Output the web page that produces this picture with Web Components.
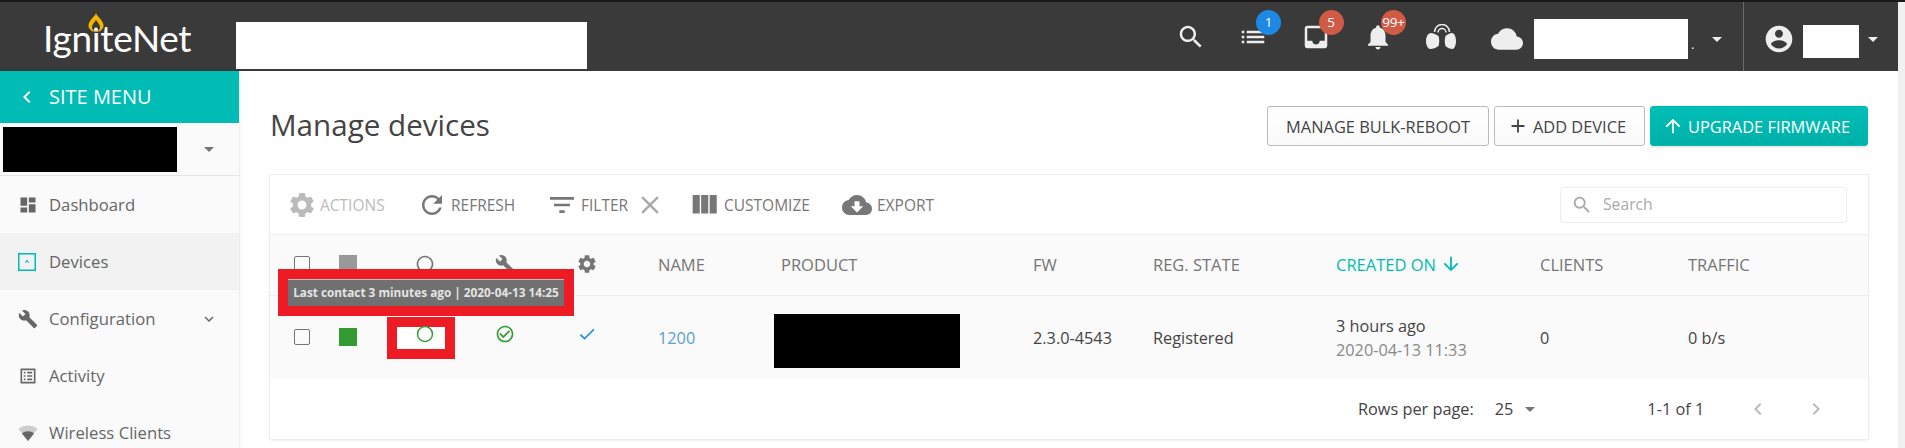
<!DOCTYPE html>
<html lang="en">
<head>
<meta charset="utf-8">
<title>Manage devices</title>
<style>
  html, body { margin: 0; height: 448px; overflow: hidden; background: #fff; }
  body { font-family: "Open Sans", "Liberation Sans", sans-serif; }
</style>
</head>
<body>
<ig-app>
  <ig-topbar slot="top"></ig-topbar>
  <ig-sidebar slot="side">
    <ig-nav-item icon="dashboard">Dashboard</ig-nav-item>
    <ig-nav-item icon="devices" active>Devices</ig-nav-item>
    <ig-nav-item icon="wrench" expandable>Configuration</ig-nav-item>
    <ig-nav-item icon="activity">Activity</ig-nav-item>
    <ig-nav-item icon="wifi">Wireless Clients</ig-nav-item>
  </ig-sidebar>
  <ig-page-head>
    <ig-button style="width: 222px">MANAGE BULK-REBOOT</ig-button>
    <ig-button style="width: 151px" icon="add">ADD DEVICE</ig-button>
    <ig-button style="width: 218px" icon="up" primary>UPGRADE FIRMWARE</ig-button>
  </ig-page-head>
  <ig-device-card></ig-device-card>
  <ig-callout slot="over" class="tip">Last contact 3 minutes ago | 2020-04-13 14:25</ig-callout>
  <ig-callout slot="over" class="spot"></ig-callout>
</ig-app>

<script>
const ICONS = {
  search: 'M15.5 14h-.79l-.28-.27C15.41 12.59 16 11.11 16 9.5 16 5.91 13.09 3 9.5 3S3 5.91 3 9.5 5.91 16 9.5 16c1.61 0 3.09-.59 4.23-1.57l.27.28v.79l5 4.99L20.49 19l-4.99-5zm-6 0C7.01 14 5 11.99 5 9.5S7.01 5 9.5 5 14 7.01 14 9.5 11.99 14 9.5 14z',
  list: 'M3 13h2v-2H3v2zm0 4h2v-2H3v2zm0-8h2V7H3v2zm4 4h14v-2H7v2zm0 4h14v-2H7v2zM7 7v2h14V7H7z',
  inbox: 'M19 3H4.99c-1.11 0-1.98.89-1.98 2L3 19c0 1.1.88 2 1.99 2H19c1.1 0 2-.9 2-2V5c0-1.11-.9-2-2-2zm0 12h-4c0 1.66-1.35 3-3 3s-3-1.34-3-3H4.99V5H19v10z',
  bell: 'M12 22c1.1 0 2-.9 2-2h-4c0 1.1.89 2 2 2zm6-6v-5c0-3.07-1.64-5.64-4.5-6.32V4c0-.83-.67-1.5-1.5-1.5s-1.5.67-1.5 1.5v.68C7.63 5.36 6 7.92 6 11v5l-2 2v1h16v-1l-2-2z',
  cloud: 'M19.35 10.04C18.67 6.59 15.64 4 12 4 9.11 4 6.6 5.64 5.35 8.04 2.34 8.36 0 10.91 0 14c0 3.31 2.69 6 6 6h13c2.76 0 5-2.24 5-5 0-2.64-2.05-4.78-4.65-4.96z',
  account: 'M12 2C6.48 2 2 6.48 2 12s4.48 10 10 10 10-4.48 10-10S17.52 2 12 2zm0 3c1.66 0 3 1.34 3 3s-1.34 3-3 3-3-1.34-3-3 1.34-3 3-3zm0 14.2c-2.5 0-4.71-1.28-6-3.22.03-1.99 4-3.08 6-3.08 1.99 0 5.97 1.09 6 3.08-1.29 1.94-3.5 3.22-6 3.22z',
  gear: 'M19.14 12.94c.04-.3.06-.61.06-.94 0-.32-.02-.64-.07-.94l2.03-1.58c.18-.14.23-.41.12-.61l-1.92-3.32c-.12-.22-.37-.29-.59-.22l-2.39.96c-.5-.38-1.03-.7-1.62-.94l-.36-2.54c-.04-.24-.24-.41-.48-.41h-3.84c-.24 0-.43.17-.47.41l-.36 2.54c-.59.24-1.13.57-1.62.94l-2.39-.96c-.22-.08-.47 0-.59.22L2.74 8.87c-.12.21-.08.47.12.61l2.03 1.58c-.05.3-.09.63-.09.94s.02.64.07.94l-2.03 1.58c-.18.14-.23.41-.12.61l1.92 3.32c.12.22.37.29.59.22l2.39-.96c.5.38 1.03.7 1.62.94l.36 2.54c.05.24.24.41.48.41h3.84c.24 0 .44-.17.47-.41l.36-2.54c.59-.24 1.13-.56 1.62-.94l2.39.96c.22.08.47 0 .59-.22l1.92-3.32c.12-.22.07-.47-.12-.61l-2.01-1.58zM12 15.6c-1.98 0-3.6-1.62-3.6-3.6s1.62-3.6 3.6-3.6 3.6 1.62 3.6 3.6-1.62 3.6-3.6 3.6z',
  wrench: 'M22.7 19l-9.1-9.1c.9-2.3.4-5-1.5-6.9-2-2-5-2.4-7.4-1.3L9 6 6 9 1.6 4.7C.4 7.1.9 10.1 2.9 12.1c1.9 1.9 4.6 2.4 6.9 1.5l9.1 9.1c.4.4 1 .4 1.4 0l2.3-2.3c.5-.4.5-1.1.1-1.4z',
  refresh: 'M17.65 6.35C16.2 4.9 14.21 4 12 4c-4.42 0-7.99 3.58-7.99 8s3.57 8 7.99 8c3.73 0 6.84-2.55 7.73-6h-2.08c-.82 2.33-3.04 4-5.65 4-3.31 0-6-2.69-6-6s2.69-6 6-6c1.66 0 3.14.69 4.22 1.78L13 11h7V4l-2.35 2.35z',
  filter: 'M10 18h4v-2h-4v2zM3 6v2h18V6H3zm3 7h12v-2H6v2z',
  close: 'M19 6.41L17.59 5 12 10.59 6.41 5 5 6.41 10.59 12 5 17.59 6.41 19 12 13.41 17.59 19 19 17.59 13.41 12 19 6.41z',
  columns: 'M10 18h5V5h-5v13zm-6 0h5V5H4v13zM16 5v13h5V5h-5z',
  download: 'M19.35 10.04C18.67 6.59 15.64 4 12 4 9.11 4 6.6 5.64 5.35 8.04 2.34 8.36 0 10.91 0 14c0 3.31 2.69 6 6 6h13c2.76 0 5-2.24 5-5 0-2.64-2.05-4.78-4.65-4.96zM17 13l-5 5-5-5h3V9h4v4h3z',
  dashboard: 'M3 13h8V3H3v10zm0 8h8v-6H3v6zm10 0h8V11h-8v10zm0-18v6h8V3h-8z',
  activity: 'M19 5v14H5V5h14m1.1-2H3.9c-.5 0-.9.4-.9.9v16.2c0 .4.4.9.9.9h16.2c.4 0 .9-.5.9-.9V3.9c0-.5-.5-.9-.9-.9zM11 7h6v2h-6V7zm0 4h6v2h-6v-2zm0 4h6v2h-6zM7 7h2v2H7zm0 4h2v2H7zm0 4h2v2H7z',
  check: 'M9 16.17L4.83 12l-1.42 1.41L9 19 21 7l-1.41-1.41z',
  checkcircle: 'M16.59 7.58L10 14.17l-3.59-3.58L5 12l5 5 8-8zM12 2C6.48 2 2 6.48 2 12s4.48 10 10 10 10-4.48 10-10S17.52 2 12 2zm0 18c-4.42 0-8-3.58-8-8s3.58-8 8-8 8 3.58 8 8-3.58 8-8 8z',
  ring: 'M12 2C6.48 2 2 6.48 2 12s4.48 10 10 10 10-4.48 10-10S17.52 2 12 2zm0 18c-4.42 0-8-3.58-8-8s3.58-8 8-8 8 3.58 8 8-3.58 8-8 8z',
  up: 'M4 12l1.41 1.41L11 7.83V20h2V7.83l5.58 5.59L20 12l-8-8-8 8z',
  down: 'M20 12l-1.41-1.41L13 16.17V4h-2v12.17l-5.58-5.59L4 12l8 8 8-8z',
  add: 'M19 13h-6v6h-2v-6H5v-2h6V5h2v6h6v2z',
  left: 'M15.41 7.41L14 6l-6 6 6 6 1.41-1.41L10.83 12z',
  right: 'M10 6L8.59 7.41 13.17 12l-4.58 4.59L10 18l6-6z',
  more: 'M16.59 8.59L12 13.17 7.41 8.59 6 10l6 6 6-6z',
  caret: 'M7 10l5 5 5-5z'
};

class IgIcon extends HTMLElement {
  connectedCallback() {
    const size = this.getAttribute('size') || 24;
    const color = this.getAttribute('color') || 'currentColor';
    this.attachShadow({ mode: 'open' }).innerHTML = `
      <style>:host { display: inline-flex; flex: none; } svg { display: block; }</style>
      <svg width="${size}" height="${size}" viewBox="0 0 24 24" fill="${color}"><path d="${ICONS[this.getAttribute('name')]}"/></svg>`;
  }
}
customElements.define('ig-icon', IgIcon);

const appTemplate = document.createElement('template');
appTemplate.innerHTML = `
  <style>
    :host { display: block; position: relative; width: 1905px; height: 448px; overflow: hidden; background: #fff; }
    .frame { display: grid; grid-template-columns: 1898px 7px; height: 100%; }
    .shell { display: flex; flex-direction: column; min-width: 0; }
    .body { display: flex; flex: 1; min-height: 0; }
    main { flex: 1; min-width: 0; padding: 35px 30px 0 30px; }
    .scroll { background: #f1f1f1; border-top: 2px solid #1a1a1a; }
  </style>
  <div class="frame">
    <div class="shell">
      <slot name="top"></slot>
      <div class="body">
        <slot name="side"></slot>
        <main><slot></slot></main>
      </div>
    </div>
    <div class="scroll"></div>
  </div>
  <slot name="over"></slot>
`;
class IgApp extends HTMLElement {
  constructor() {
    super();
    this.attachShadow({ mode: 'open' }).appendChild(appTemplate.content.cloneNode(true));
  }
}
customElements.define('ig-app', IgApp);

const topbarTemplate = document.createElement('template');
topbarTemplate.innerHTML = `
  <style>
    :host { display: flex; align-items: center; height: 69px; flex: none; background: #3a3a3a; border-top: 2px solid #1a1a1a; color: #eee; }
    .logo { position: relative; width: 191px; margin-left: 45px; flex: none; height: 69px; }
    .logo span { position: absolute; left: -2px; top: 6px; font: 400 37px/60px Lato, "Open Sans", sans-serif; color: #fff; letter-spacing: -.3px; }
    .logo svg { position: absolute; left: 43px; top: 11px; }
    .mask { background: #fff; flex: none; }
    .site { width: 351px; height: 47px; margin-top: 18px; }
    .right { display: flex; align-items: center; margin-left: auto; padding-right: 13px; }
    .btn { position: relative; width: 62.5px; height: 30px; display: flex; justify-content: center; margin-top: 1px; }
    .btn > svg { margin-top: 2px; }
    .badge { position: absolute; top: -12.5px; left: 34px; width: 25px; height: 25px; border-radius: 50%; background: #d05a45; color: #fff; font-size: 13.5px; line-height: 25px; text-align: center; letter-spacing: -.3px; }
    .badge.blue { background: #1e88e5; }
    .cloud { margin: 5px 11px 0 19px; }
    .net { width: 154px; height: 40px; margin-top: 5px; }
    .dot { width: 17px; font-size: 13px; line-height: 1; padding-left: 3px; box-sizing: border-box; margin-top: 15px; }
    .caret { margin-top: 5px; }
    .rule { width: 1px; height: 69px; background: #6a6a6a; margin: 0 19px 0 14px; }
    .user { margin-top: 5px; }
    .me { width: 56px; height: 33px; margin: 10px 2px 0 8px; }
  </style>
  <div class="logo">
    <span>IgniteNet</span>
    <svg width="16" height="19" viewBox="0 0 16 19">
      <path fill="#f5b400" d="M8 0C8.500 3 15 7 15.500 12 15.800 15 14 17 11.500 18.500L4.500 18.500C2 17 .2 15 .5 12 1 7 7.500 3 8 0z"/>
      <path fill="#3a3a3a" d="M8 7C9.500 9.500 12 11.500 12 14A4 4 0 0 1 4 14C4 11.500 6.500 9.500 8 7z"/>
      <circle cx="8" cy="16.500" r="2" fill="#fff"/>
    </svg>
  </div>
  <div class="mask site"></div>
  <div class="right">
    <div class="btn"><ig-icon name="search" size="30"></ig-icon></div>
    <div class="btn"><ig-icon name="list" size="30"></ig-icon><span class="badge blue">1</span></div>
    <div class="btn"><ig-icon name="inbox" size="30"></ig-icon><span class="badge">5</span></div>
    <div class="btn"><ig-icon name="bell" size="30"></ig-icon><span class="badge">99+</span></div>
    <div class="btn">
      <svg width="30" height="25" viewBox="0 0 30 25" fill="#eee">
        <path d="M5 9C2 9 0 13 0 17 0 21 2 25 4 25 7 25 10 24 12.500 22 13.500 19 13.500 15 12.500 12 10.500 10.500 7 9 5 9zM26 9C24 9 21 10.500 19.500 12 18.500 15 18.500 19 19.500 22 21.500 24 24 25 26.500 25 28.500 25 30 21 30 17 30 13 28.500 9 26 9z"/>
        <path d="M8.500 8A7.500 7.500 0 0 1 23.500 8M12 8.500A4 4 0 0 1 20 8.500" fill="none" stroke="#eee" stroke-width="1.500"/>
      </svg>
    </div>
    <ig-icon class="cloud" name="cloud" size="32"></ig-icon>
    <div class="mask net"></div>
    <div class="dot">.</div>
    <ig-icon class="caret" name="caret" size="24" color="#eee"></ig-icon>
    <div class="rule"></div>
    <ig-icon class="user" name="account" size="32"></ig-icon>
    <div class="mask me"></div>
    <ig-icon class="caret" name="caret" size="24" color="#eee"></ig-icon>
  </div>
`;
class IgTopbar extends HTMLElement {
  constructor() {
    super();
    this.attachShadow({ mode: 'open' }).appendChild(topbarTemplate.content.cloneNode(true));
  }
}
customElements.define('ig-topbar', IgTopbar);

const sidebarTemplate = document.createElement('template');
sidebarTemplate.innerHTML = `
  <style>
    :host { display: block; width: 239px; flex: none; background: #fafafa; border-right: 1px solid #eee; box-shadow: 1px 0 2px rgba(0,0,0,.04); }
    .back { display: flex; align-items: center; height: 52px; background: #00bcb4; color: #fff; font-size: 20px; padding-left: 15px; gap: 10px; }
    .back span { margin-top: -2px; }
    .picker { display: flex; align-items: center; height: 52px; padding: 0 18px 0 3px; border-bottom: 1px solid #e4e4e4; }
    .mask { width: 174px; height: 45px; background: #000; }
    .picker ig-icon { margin-left: auto; margin-top: -1px; }
    .nav { display: flex; flex-direction: column; }
  </style>
  <div class="back"><ig-icon name="left" size="24"></ig-icon><span>SITE MENU</span></div>
  <div class="picker"><div class="mask"></div><ig-icon name="caret" size="24" color="#757575"></ig-icon></div>
  <div class="nav"><slot></slot></div>
`;
class IgSidebar extends HTMLElement {
  constructor() {
    super();
    this.attachShadow({ mode: 'open' }).appendChild(sidebarTemplate.content.cloneNode(true));
  }
}
customElements.define('ig-sidebar', IgSidebar);

const NAV_GLYPHS = {
  devices: `<svg width="18" height="18" viewBox="0 0 18 18"><rect x=".75" y=".75" width="16.500" height="16.500" fill="none" stroke="#00bcb4" stroke-width="1.500"/><path d="M7.500 10 9 7l1.500 3" fill="none" stroke="#00bcb4"/></svg>`,
  wifi: `<svg width="20" height="20" viewBox="0 0 24 24" fill="#666"><path fill-opacity=".3" d="M12.010 21.490L23.640 7c-.45-.34-4.930-4-11.640-4C5.280 3 .81 6.660.36 7l11.630 14.490.01.01.01-.01z"/><path d="M4.790 12.520l7.200 8.980H12l.01-.01 7.200-8.980C18.850 12.240 16.100 10 12 10s-6.850 2.240-7.210 2.520z"/></svg>`
};

class IgNavItem extends HTMLElement {
  connectedCallback() {
    const icon = this.getAttribute('icon');
    const glyph = NAV_GLYPHS[icon] || `<ig-icon name="${icon}" size="20" color="#666"></ig-icon>`;
    const more = this.hasAttribute('expandable') ? `<ig-icon class="more" name="more" size="18" color="#666"></ig-icon>` : '';
    this.attachShadow({ mode: 'open' }).innerHTML = `
      <style>
        :host { display: flex; align-items: center; height: 57px; padding: 0 21px 0 18px; color: #666; font-size: 16.7px; }
        :host([active]) { background: #f2f2f2; }
        .ic { width: 31px; display: flex; align-items: center; flex: none; }
        .more { margin-left: auto; }
      </style>
      <span class="ic">${glyph}</span><slot></slot>${more}`;
  }
}
customElements.define('ig-nav-item', IgNavItem);

const headTemplate = document.createElement('template');
headTemplate.innerHTML = `
  <style>
    :host { display: flex; align-items: center; height: 40px; margin-bottom: 29px; }
    h1 { margin: -2px auto 0 0; font-weight: 400; font-size: 29.6px; color: #444; line-height: 40px; }
    .actions { display: flex; gap: 5px; }
  </style>
  <h1>Manage devices</h1>
  <div class="actions"><slot></slot></div>
`;
class IgPageHead extends HTMLElement {
  constructor() {
    super();
    this.attachShadow({ mode: 'open' }).appendChild(headTemplate.content.cloneNode(true));
  }
}
customElements.define('ig-page-head', IgPageHead);

class IgButton extends HTMLElement {
  connectedCallback() {
    const icon = this.getAttribute('icon');
    this.attachShadow({ mode: 'open' }).innerHTML = `
      <style>
        :host { display: inline-flex; align-items: center; justify-content: center; gap: 4px; box-sizing: border-box; height: 40px; border: 1px solid #bbb; border-radius: 3px; background: linear-gradient(#fff, #fafafa); color: #444; font-size: 16.4px; white-space: nowrap; }
        :host([icon]) { padding-right: 6px; }
        :host([primary]) { border-color: #00b8b0; background: linear-gradient(#00bfb7, #00b0a8); color: #fff; box-shadow: 0 1px 3px rgba(0,0,0,.15); }
      </style>
      ${icon ? `<ig-icon name="${icon}" size="22"></ig-icon>` : ''}<slot></slot>`;
  }
}
customElements.define('ig-button', IgButton);

class IgTool extends HTMLElement {
  connectedCallback() {
    const size = this.getAttribute('size') || 30;
    this.attachShadow({ mode: 'open' }).innerHTML = `
      <style>
        :host { display: inline-flex; align-items: center; gap: 3px; color: #777; font-size: 15.5px; white-space: nowrap; }
        :host([disabled]) { color: #bbb; }
      </style>
      <ig-icon name="${this.getAttribute('icon')}" size="${size}"></ig-icon><slot></slot>`;
  }
}
customElements.define('ig-tool', IgTool);

const cardTemplate = document.createElement('template');
cardTemplate.innerHTML = `
  <style>
    :host { display: block; width: 1598px; height: 264px; background: #fff; box-shadow: 0 0 0 1px #eee, 0 1px 3px rgba(0,0,0,.12); color: #444; font-size: 16.3px; }
    .toolbar { display: flex; align-items: center; height: 59px; padding: 0 21px 0 17px; }
    .toolbar ig-tool { flex: none; }
    .actions { width: 130px; }
    .refresh { width: 129px; gap: 4px; }
    .filter { width: 89px; }
    .x { color: #aaa; width: 30px; margin-right: 22px; display: flex; }
    .customize { width: 155px; }
    .export { gap: 5px; }
    .search { margin-left: auto; display: flex; align-items: center; gap: 10px; width: 287px; height: 36px; box-sizing: border-box; border: 1px solid #eee; border-radius: 3px; padding-left: 10px; color: #aaa; font-size: 15.7px; }
    .search span { margin-top: -2px; }
    .row { display: grid; grid-template-columns: 64px 28px 126px 34px 130px 129px 252px 120px 183px 204px 148px 180px; align-items: center; }
    .row > * { justify-self: start; }
    .c { justify-self: center !important; }
    .head { height: 62px; background: #fafafa; border-top: 1px solid #eee; border-bottom: 1px solid #eee; box-sizing: border-box; color: #757575; font-size: 16.5px; }
    .head > * { margin-top: -2px; }
    .head > .c { margin-top: -3px; }
    .t1 { padding-left: 6px; }
    .sorted { color: #00bcb4; display: inline-flex; align-items: center; gap: 4px; }
    .data { height: 83px; background: #fafafa; }
    .box { display: block; width: 14px; height: 14px; border: 1.500px solid #757575; border-radius: 2px; }
    .sq { width: 18px; height: 18px; background: #999; }
    .sq.on { background: #349b33; }
    .link { color: #5a9fcf; }
    .mask { width: 186px; height: 54px; background: #000; margin-left: -7px; margin-top: 7px; }
    .when { line-height: 24px; }
    .when small { display: block; color: #888; font-size: inherit; }
    .data .box, .data .sq { margin-top: -1px; }
    .data ig-icon { margin-top: -7px; }
    .foot { display: flex; align-items: center; height: 60px; }
    .rows { margin-left: 1088px; }
    .val { margin-left: 21px; }
    .caret { margin-left: 5px; }
    .range { margin-left: 105px; }
    .pager { margin-left: 42px; display: flex; gap: 34px; color: #bbb; }
  </style>
  <div class="toolbar">
    <ig-tool class="actions" icon="gear" disabled>ACTIONS</ig-tool>
    <ig-tool class="refresh" icon="refresh">REFRESH</ig-tool>
    <ig-tool class="filter" icon="filter" size="32">FILTER</ig-tool>
    <span class="x"><ig-icon name="close" size="30"></ig-icon></span>
    <ig-tool class="customize" icon="columns" size="34">CUSTOMIZE</ig-tool>
    <ig-tool class="export" icon="download" size="30">EXPORT</ig-tool>
    <div class="search"><ig-icon name="search" size="22" color="#aaa"></ig-icon><span>Search</span></div>
  </div>
  <div class="row head">
    <span class="c box"></span>
    <span class="c sq"></span>
    <ig-icon class="c" name="ring" size="20" color="#757575"></ig-icon>
    <ig-icon class="c" name="wrench" size="20" color="#757575"></ig-icon>
    <ig-icon class="c" name="gear" size="22" color="#757575"></ig-icon>
    <span class="t1">NAME</span>
    <span>PRODUCT</span>
    <span>FW</span>
    <span>REG. STATE</span>
    <span class="sorted">CREATED ON <ig-icon name="down" size="22"></ig-icon></span>
    <span>CLIENTS</span>
    <span>TRAFFIC</span>
  </div>
  <div class="row data">
    <span class="c box"></span>
    <span class="c sq on"></span>
    <ig-icon class="c" name="ring" size="20" color="#349b33"></ig-icon>
    <ig-icon class="c" name="checkcircle" size="20" color="#349b33"></ig-icon>
    <ig-icon class="c" name="check" size="20" color="#1e88e5"></ig-icon>
    <span class="t1 link">1200</span>
    <span class="mask"></span>
    <span>2.3.0-4543</span>
    <span>Registered</span>
    <span class="when">3 hours ago<small>2020-04-13 11:33</small></span>
    <span>0</span>
    <span>0 b/s</span>
  </div>
  <div class="foot">
    <span class="rows">Rows per page:</span>
    <span class="val">25</span>
    <ig-icon class="caret" name="caret" size="24" color="#757575"></ig-icon>
    <span class="range">1-1 of 1</span>
    <span class="pager"><ig-icon name="left" size="24"></ig-icon><ig-icon name="right" size="24"></ig-icon></span>
  </div>
`;
class IgDeviceCard extends HTMLElement {
  constructor() {
    super();
    this.attachShadow({ mode: 'open' }).appendChild(cardTemplate.content.cloneNode(true));
  }
}
customElements.define('ig-device-card', IgDeviceCard);

const calloutTemplate = document.createElement('template');
calloutTemplate.innerHTML = `
  <style>
    :host { position: absolute; box-sizing: border-box; border: 10px solid #ed1c24; display: flex; align-items: center; justify-content: center; }
    :host(.tip) { left: 278px; top: 269px; width: 296px; height: 47px; padding-bottom: 2px; background: #707070; color: #e4e4e4; font-size: 11.8px; font-weight: 700; white-space: nowrap; }
    :host(.spot) { left: 387px; top: 317px; width: 68px; height: 42px; background: #fff; }
    .line { position: absolute; left: 0; right: 0; top: 0; height: 1px; background: #bdbdbd; }
    :host(.spot) .line { display: none; }
    .ring { display: none; position: absolute; left: 18px; top: -3px; }
    :host(.spot) .ring { display: block; }
  </style>
  <span class="line"></span>
  <slot></slot>
  <svg class="ring" width="20" height="20" viewBox="0 0 20 20"><circle cx="10" cy="10" r="7.500" fill="none" stroke="#349b33" stroke-width="1.500"/></svg>
`;
class IgCallout extends HTMLElement {
  constructor() {
    super();
    this.attachShadow({ mode: 'open' }).appendChild(calloutTemplate.content.cloneNode(true));
  }
}
customElements.define('ig-callout', IgCallout);
</script>
</body>
</html>
